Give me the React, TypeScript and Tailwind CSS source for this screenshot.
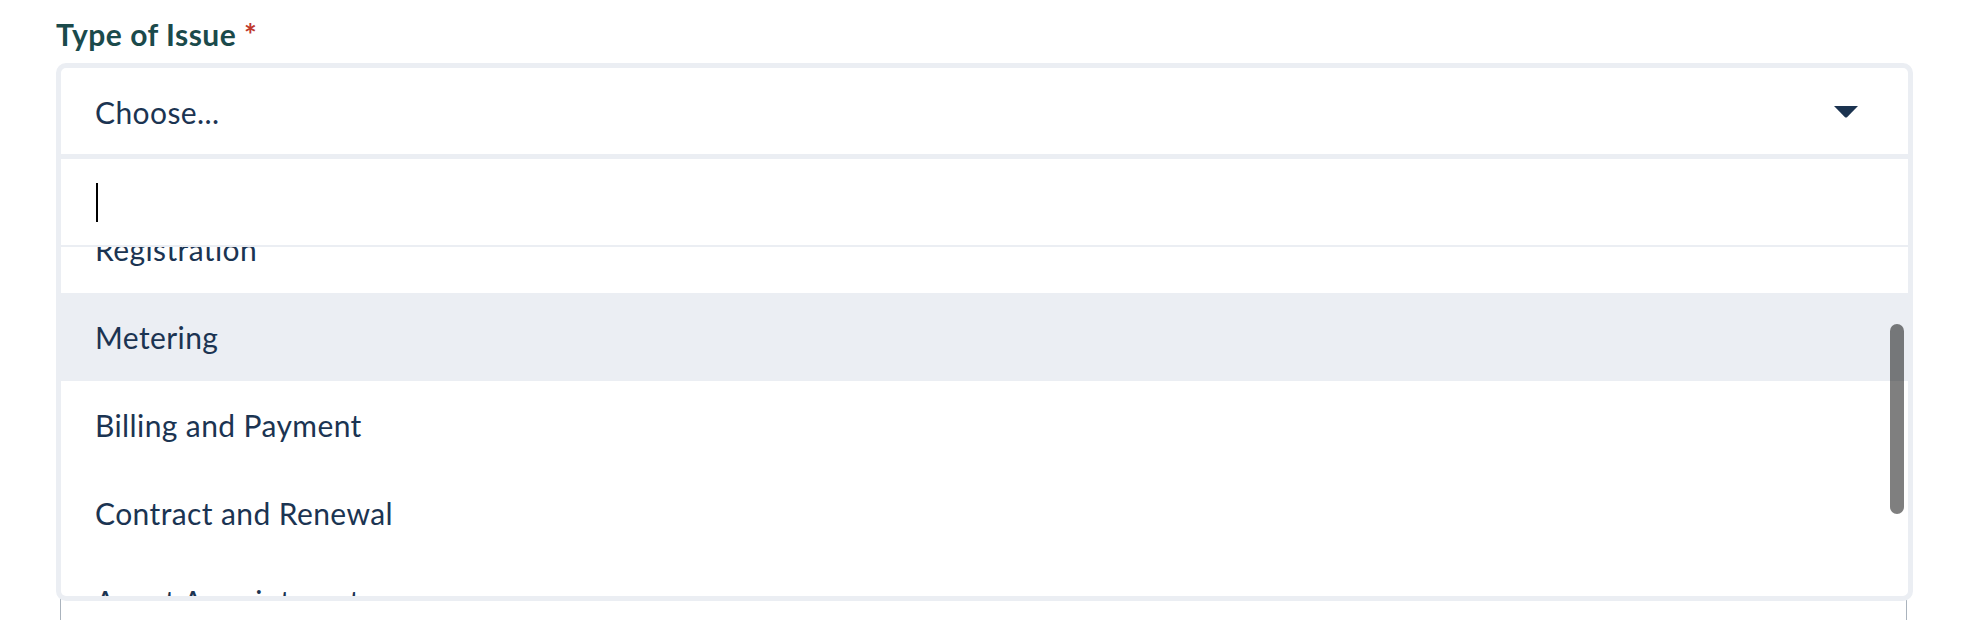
import React from 'react';

const options = ['Registration', 'Metering', 'Billing and Payment', 'Contract and Renewal', 'Agent Appointment', 'Other'];

const IssueSelect: React.FC = () => {
  const active = 'Metering';

  return (
    <div className="relative">
      <div className="h-[96px] border-[5px] border-[#ebeef3] rounded-t-[10px] bg-white flex items-center justify-between pl-[34px] pr-[50px] pt-[2px]">
        <span className="text-[30px] tracking-[0.4px] text-[#1b3452]">Choose...</span>
        <svg width="24" height="12" viewBox="0 0 24 12" className="text-[#1b3350]">
          <path d="M0 0 H24 L13 11.2 Q12 12 11 11.2 Z" fill="currentColor" />
        </svg>
      </div>

      <div className="absolute top-full left-0 right-0 z-10 bg-white border-x-[5px] border-b-[5px] border-[#ebeef3] rounded-b-[10px]">
        <div className="h-[88px] border-b-2 border-[#ebeef3] flex items-center pl-[35px] relative z-10 bg-white">
          <span className="w-[2px] h-[39px] bg-black" />
        </div>
        <div className="relative h-[349px] overflow-hidden">
          <ul className="-mt-[42px]">
            {options.map((o) => (
              <li
                key={o}
                className={`h-[88px] flex items-center pl-[34px] text-[30px] tracking-[0.4px] text-[#1b3452] ${o === active ? 'bg-[#ebeef3]' : ''}`}
              >
                {o}
              </li>
            ))}
          </ul>
          <div className="absolute right-[4px] top-[77px] w-[14px] h-[190px] rounded-full bg-black/50" />
        </div>
      </div>
    </div>
  );
};

export default function App() {
  return (
    <div className="bg-white min-h-screen pl-[56px] pr-[51px] pt-[16px] font-['Lato',sans-serif]">
      <label className="block leading-[36px] text-[30px] tracking-[0.5px] font-bold text-[#1b4a4b] mb-[11px]">
        Type of Issue <span className="text-[#c0392b]">*</span>
      </label>
      <IssueSelect />
      <div className="mt-[340px] ml-[4px] mr-[6px] h-[200px] border border-[#aab3bd] rounded-[4px]" />
    </div>
  );
}
